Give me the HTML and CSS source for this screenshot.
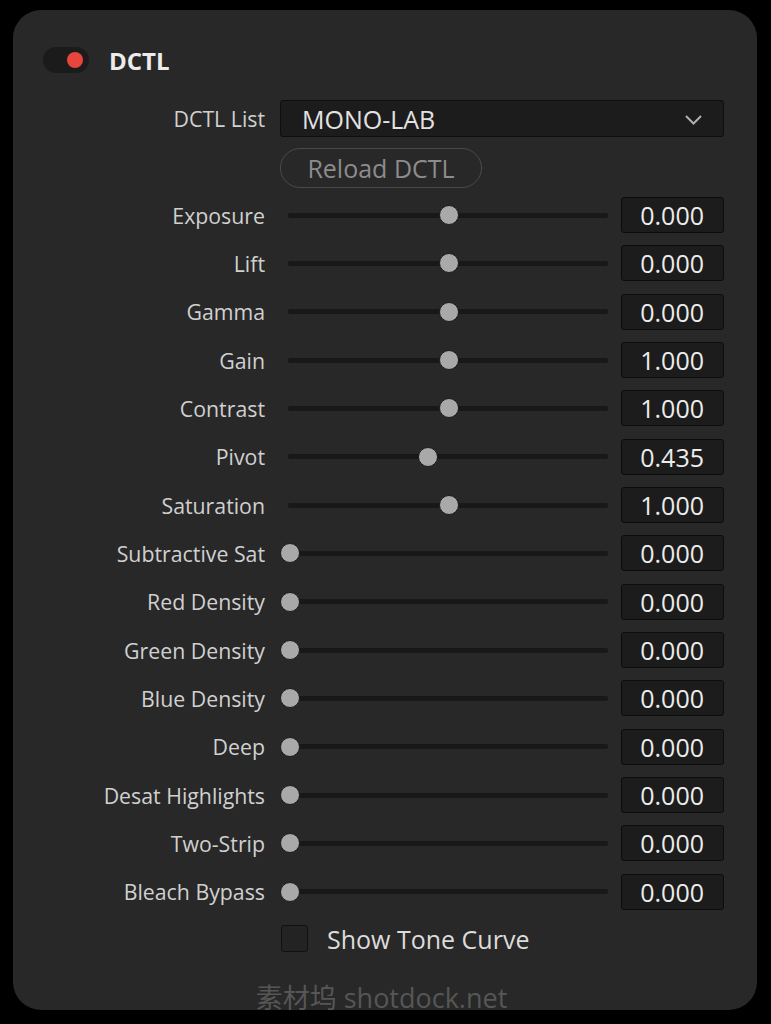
FILE: index.html
```html
<!DOCTYPE html>
<html>
<head>
<meta charset="utf-8">
<link rel="stylesheet" href="styles.css">
</head>
<body>
<div class="panel">
  <div class="header">
    <div class="toggle"><span class="dot"></span></div>
    <div class="title">DCTL</div>
  </div>
  <div class="list-row">
    <div class="label">DCTL List</div>
    <div class="dropdown">
      <span>MONO-LAB</span>
      <svg class="chev" width="19" height="12" viewBox="0 0 19 12"><path d="M2 2 L9.5 9.5 L17 2" fill="none" stroke="#b0b0b0" stroke-width="2"/></svg>
    </div>
  </div>
  <div class="reload-row">
    <div class="reload">Reload DCTL</div>
  </div>
  <div class="rows">
    <div class="label">Exposure</div><div class="slider"><div class="knob" style="--v:0.5"></div></div><div class="value">0.000</div>
    <div class="label">Lift</div><div class="slider"><div class="knob" style="--v:0.5"></div></div><div class="value">0.000</div>
    <div class="label">Gamma</div><div class="slider"><div class="knob" style="--v:0.5"></div></div><div class="value">0.000</div>
    <div class="label">Gain</div><div class="slider"><div class="knob" style="--v:0.5"></div></div><div class="value">1.000</div>
    <div class="label">Contrast</div><div class="slider"><div class="knob" style="--v:0.5"></div></div><div class="value">1.000</div>
    <div class="label">Pivot</div><div class="slider"><div class="knob" style="--v:0.435"></div></div><div class="value">0.435</div>
    <div class="label">Saturation</div><div class="slider"><div class="knob" style="--v:0.5"></div></div><div class="value">1.000</div>
    <div class="label">Subtractive Sat</div><div class="slider"><div class="knob" style="--v:0"></div></div><div class="value">0.000</div>
    <div class="label">Red Density</div><div class="slider"><div class="knob" style="--v:0"></div></div><div class="value">0.000</div>
    <div class="label">Green Density</div><div class="slider"><div class="knob" style="--v:0"></div></div><div class="value">0.000</div>
    <div class="label">Blue Density</div><div class="slider"><div class="knob" style="--v:0"></div></div><div class="value">0.000</div>
    <div class="label">Deep</div><div class="slider"><div class="knob" style="--v:0"></div></div><div class="value">0.000</div>
    <div class="label">Desat Highlights</div><div class="slider"><div class="knob" style="--v:0"></div></div><div class="value">0.000</div>
    <div class="label">Two-Strip</div><div class="slider"><div class="knob" style="--v:0"></div></div><div class="value">0.000</div>
    <div class="label">Bleach Bypass</div><div class="slider"><div class="knob" style="--v:0"></div></div><div class="value">0.000</div>
  </div>
  <div class="check-row">
    <div class="checkbox"></div>
    <div class="check-label">Show Tone Curve</div>
  </div>
  <div class="watermark">素材坞 shotdock.net</div>
</div>
</body>
</html>
```
FILE: styles.css
```css
html, body {
  margin: 0;
  padding: 0;
  background: #000;
}
body {
  padding: 10px 14px 14px 13px;
  font-family: "Open Sans", "Noto Sans", "Noto Sans CJK SC", sans-serif;
  color: #d2d2d2;
}
.panel {
  background: #282828;
  border-radius: 28px;
  height: 1000px;
  box-sizing: border-box;
  padding: 37px 33px 0 0;
}
.header {
  display: flex;
  align-items: center;
  padding-left: 30px;
  height: 26px;
}
.toggle {
  width: 46px;
  height: 26px;
  border-radius: 13px;
  background: #1b1b1b;
  position: relative;
  flex: none;
}
.dot {
  position: absolute;
  right: 6px;
  top: 5px;
  width: 16px;
  height: 16px;
  border-radius: 50%;
  background: #e8453c;
}
.title {
  margin-left: 20px;
  font-weight: 700;
  font-size: 24px;
  color: #ececec;
}
.list-row {
  display: grid;
  grid-template-columns: 252px 1fr;
  column-gap: 15px;
  margin-top: 27px;
  height: 37px;
  align-items: center;
}
.label {
  text-align: right;
  font-size: 21.3px;
  color: #d0d0d0;
  white-space: nowrap;
}
.dropdown {
  height: 37px;
  box-sizing: border-box;
  background: #1c1c1c;
  border: 1px solid #0e0e0e;
  border-radius: 3px;
  display: flex;
  align-items: center;
  justify-content: space-between;
  padding: 0 20px 0 21px;
  font-size: 25px;
  color: #e2e2e2;
}
.chev { display: block; margin-top: 2px; }
.reload-row {
  padding-left: 267px;
  margin-top: 11px;
}
.reload {
  width: 202px;
  height: 40px;
  box-sizing: border-box;
  border: 1.5px solid #4a4a4a;
  border-radius: 20px;
  display: flex;
  align-items: center;
  justify-content: center;
  font-size: 25px;
  color: #8c8c8c;
}
.rows {
  margin-top: 3px;
  display: grid;
  grid-template-columns: 252px 326px 103px;
  column-gap: 15px;
  grid-auto-rows: 48.33px;
  align-items: center;
}
.slider {
  position: relative;
  height: 20px;
}
.slider::before {
  content: "";
  position: absolute;
  left: 8px;
  right: -2px;
  top: 7.5px;
  height: 5px;
  background: #181818;
  border-radius: 2px;
}
.knob {
  position: absolute;
  top: 0;
  left: calc(var(--v) * 318px);
  width: 20px;
  height: 20px;
  box-sizing: border-box;
  border-radius: 50%;
  background: #a9a9a9;
  border: 1px solid #1c1c1c;
}
.value {
  height: 36px;
  box-sizing: border-box;
  background: #1c1c1c;
  border: 1px solid #0c0c0c;
  border-radius: 3px;
  display: flex;
  align-items: center;
  justify-content: flex-end;
  padding-right: 19px;
  font-size: 25px;
  color: #ececec;
}
.check-row {
  display: flex;
  align-items: center;
  padding-left: 268px;
  margin-top: 6px;
}
.checkbox {
  width: 27px;
  height: 27px;
  box-sizing: border-box;
  background: #232323;
  border: 1px solid #111;
  border-radius: 3px;
}
.check-label {
  margin-left: 19px;
  font-size: 25px;
  color: #dcdcdc;
}
.watermark {
  text-align: center;
  margin-top: 21px;
  padding-left: 26px;
  font-size: 27px;
  color: #565656;
}
```
